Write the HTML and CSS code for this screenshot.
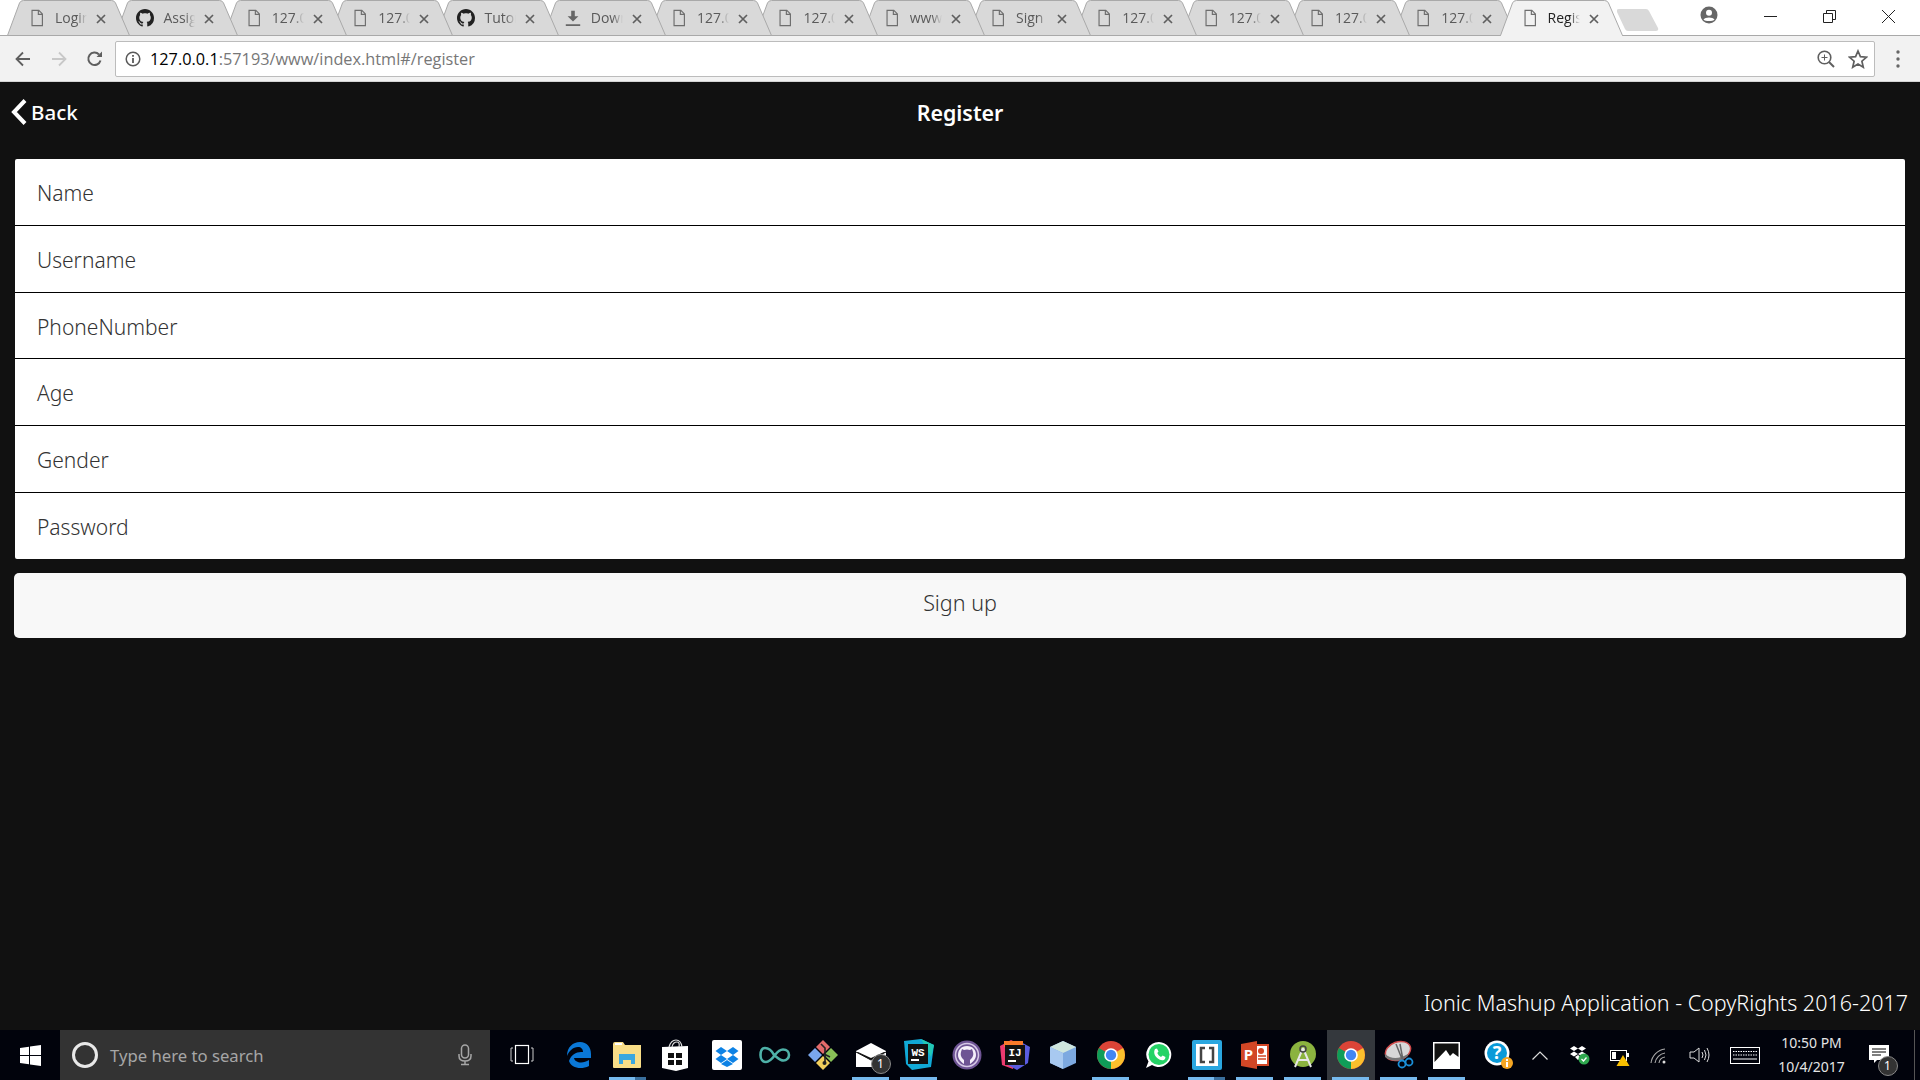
FILE: index.html
```html
<!DOCTYPE html>
<html lang="en">
<head>
<meta charset="utf-8">
<title>Register</title>
<link rel="stylesheet" href="styles.css">
</head>
<body>
<svg class="defs" width="0" height="0" aria-hidden="true">
  <symbol id="tabshape" viewBox="0 0 123 36"><path d="M0.5 35.5L12.5 3Q13.6 .5 16.5 .5H104.5Q107.4 .5 108.5 3L122.5 35.5Z" fill="#d9d9d9" stroke="#a9a9a9"/></symbol>
  <symbol id="tabactive" viewBox="0 0 123 36"><path d="M0.5 35.5L12.5 3Q13.6 .5 16.5 .5H104.5Q107.4 .5 108.5 3L122.5 35.5" fill="#f2f2f2" stroke="#a9a9a9"/><path d="M1 35.5H122" stroke="#f2f2f2"/></symbol>
  <symbol id="doc" viewBox="0 0 16 20"><path d="M2.5 1.5H10L14 5.5V18.500H2.500ZM9.500 1.500V6H14" fill="none" stroke="#6e6e6e" stroke-width="1.300"/></symbol>
  <symbol id="gh" viewBox="0 0 16 16"><path fill="#222" d="M8 0C3.58 0 0 3.58 0 8c0 3.54 2.29 6.53 5.47 7.59.4.07.55-.17.55-.38 0-.19-.01-.82-.01-1.49-2.01.37-2.53-.49-2.69-.94-.09-.23-.48-.94-.82-1.13-.28-.15-.68-.52-.01-.53.63-.01 1.08.58 1.23.82.72 1.21 1.87.87 2.33.66.07-.52.28-.87.51-1.07-1.78-.2-3.64-.89-3.64-3.95 0-.87.31-1.59.82-2.15-.08-.2-.36-1.02.08-2.12 0 0 .67-.21 2.2.82.64-.18 1.32-.27 2-.27.68 0 1.36.09 2 .27 1.53-1.04 2.2-.82 2.2-.82.44 1.1.16 1.92.08 2.12.51.56.82 1.27.82 2.15 0 3.07-1.87 3.75-3.65 3.95.29.25.54.73.54 1.48 0 1.07-.01 1.93-.01 2.2 0 .21.15.46.55.38A8.013 8.013 0 0016 8c0-4.42-3.58-8-8-8z"/></symbol>
  <symbol id="dl" viewBox="0 0 20 20"><path d="M8 2h4v6h4l-6 6-6-6h4zM2 17h16v2H2z" fill="#666"/></symbol>
  <symbol id="x" viewBox="0 0 10 10"><path d="M1 1L9 9M9 1L1 9" stroke="#5f5f5f" stroke-width="1.700" fill="none"/></symbol>
  <symbol id="chrome" viewBox="0 0 32 32">
    <circle cx="16" cy="16" r="14" fill="#db4437"/>
    <path d="M28.100 9A14 14 0 0 1 16 30L16 16Z" fill="#fbc02d"/>
    <path d="M16 30A14 14 0 0 1 3.900 9L16 16Z" fill="#0f9d58"/>
    <circle cx="16" cy="16" r="6.800" fill="#fff"/><circle cx="16" cy="16" r="5.200" fill="#4285f4"/>
  </symbol>
</svg>

<header class="browser">
  <div class="tabstrip">
    <div class="tab"><svg class="shape"><use href="#tabshape"/></svg><svg class="fav"><use href="#doc"/></svg><span class="tabtitle">Login</span><svg class="close"><use href="#x"/></svg></div>
    <div class="tab"><svg class="shape"><use href="#tabshape"/></svg><svg class="fav"><use href="#gh"/></svg><span class="tabtitle">Assignment</span><svg class="close"><use href="#x"/></svg></div>
    <div class="tab"><svg class="shape"><use href="#tabshape"/></svg><svg class="fav"><use href="#doc"/></svg><span class="tabtitle">127.0.0.1</span><svg class="close"><use href="#x"/></svg></div>
    <div class="tab"><svg class="shape"><use href="#tabshape"/></svg><svg class="fav"><use href="#doc"/></svg><span class="tabtitle">127.0.0.1</span><svg class="close"><use href="#x"/></svg></div>
    <div class="tab"><svg class="shape"><use href="#tabshape"/></svg><svg class="fav"><use href="#gh"/></svg><span class="tabtitle">Tutorial</span><svg class="close"><use href="#x"/></svg></div>
    <div class="tab"><svg class="shape"><use href="#tabshape"/></svg><svg class="fav"><use href="#dl"/></svg><span class="tabtitle">Downloads</span><svg class="close"><use href="#x"/></svg></div>
    <div class="tab"><svg class="shape"><use href="#tabshape"/></svg><svg class="fav"><use href="#doc"/></svg><span class="tabtitle">127.0.0.1</span><svg class="close"><use href="#x"/></svg></div>
    <div class="tab"><svg class="shape"><use href="#tabshape"/></svg><svg class="fav"><use href="#doc"/></svg><span class="tabtitle">127.0.0.1</span><svg class="close"><use href="#x"/></svg></div>
    <div class="tab"><svg class="shape"><use href="#tabshape"/></svg><svg class="fav"><use href="#doc"/></svg><span class="tabtitle">www.example</span><svg class="close"><use href="#x"/></svg></div>
    <div class="tab"><svg class="shape"><use href="#tabshape"/></svg><svg class="fav"><use href="#doc"/></svg><span class="tabtitle">Sign up</span><svg class="close"><use href="#x"/></svg></div>
    <div class="tab"><svg class="shape"><use href="#tabshape"/></svg><svg class="fav"><use href="#doc"/></svg><span class="tabtitle">127.0.0.1</span><svg class="close"><use href="#x"/></svg></div>
    <div class="tab"><svg class="shape"><use href="#tabshape"/></svg><svg class="fav"><use href="#doc"/></svg><span class="tabtitle">127.0.0.1</span><svg class="close"><use href="#x"/></svg></div>
    <div class="tab"><svg class="shape"><use href="#tabshape"/></svg><svg class="fav"><use href="#doc"/></svg><span class="tabtitle">127.0.0.1</span><svg class="close"><use href="#x"/></svg></div>
    <div class="tab"><svg class="shape"><use href="#tabshape"/></svg><svg class="fav"><use href="#doc"/></svg><span class="tabtitle">127.0.0.1</span><svg class="close"><use href="#x"/></svg></div>
    <div class="tab active"><svg class="shape"><use href="#tabactive"/></svg><svg class="fav"><use href="#doc"/></svg><span class="tabtitle">Register</span><svg class="close"><use href="#x"/></svg></div>
    <svg class="newtab" width="42" height="22" viewBox="0 0 42 22"><path d="M2 0H29Q31 0 32 2L41 19Q42 22 39 22H11Q9 22 8 20L0 3Q-1 0 2 0Z" fill="#d9d9d9"/></svg>
    <div class="winctl">
      <svg class="profile" width="18" height="18" viewBox="0 0 18 18"><circle cx="9" cy="9" r="8.500" fill="#666"/><circle cx="9" cy="6.800" r="3" fill="#fff"/><path d="M3.500 13.500C5 10.700 13 10.700 14.500 13.500C13 15.500 5 15.500 3.500 13.500Z" fill="#fff"/></svg>
      <svg class="wbtn" width="13" height="13" viewBox="0 0 13 13"><path d="M0 6.500H13" stroke="#222"/></svg>
      <svg class="wbtn" width="13" height="13" viewBox="0 0 13 13"><path d="M.5 3.500H9.500V12.500H.5ZM3.500 3.500V.5H12.500V9.500H9.500" fill="none" stroke="#222"/></svg>
      <svg class="wbtn" width="13" height="13" viewBox="0 0 13 13"><path d="M0 0L13 13M13 0L0 13" stroke="#222"/></svg>
    </div>
  </div>
  <div class="toolbar">
    <svg class="tool" width="20" height="20" viewBox="0 0 20 20"><path d="M17 10H4M10 3.500L3.500 10L10 16.500" fill="none" stroke="#5f5f5f" stroke-width="1.800"/></svg>
    <svg class="tool" width="20" height="20" viewBox="0 0 20 20"><path d="M3 10H16M10 3.500L16.500 10L10 16.500" fill="none" stroke="#c8c8c8" stroke-width="1.800"/></svg>
    <svg class="tool" width="20" height="20" viewBox="0 0 20 20"><path d="M15.500 11.500A6.200 6.200 0 1 1 14 5.500" fill="none" stroke="#5f5f5f" stroke-width="2"/><path d="M11.500 8H17V2.500Z" fill="#5f5f5f"/></svg>
    <div class="omnibox">
      <svg class="info" width="16" height="16" viewBox="0 0 16 16"><circle cx="8" cy="8" r="6.800" fill="none" stroke="#5a5a5a" stroke-width="1.500"/><path d="M7.100 7h1.800v5H7.100zM7.100 4h1.800v1.800H7.100z" fill="#5a5a5a"/></svg>
      <span class="url"><span class="host">127.0.0.1</span>:57193/www/index.html#/register</span>
      <svg class="omni-zoom" width="20" height="20" viewBox="0 0 20 20"><circle cx="8.500" cy="8.500" r="6.300" fill="none" stroke="#5f5f5f" stroke-width="1.600"/><path d="M13 13L18 18" stroke="#5f5f5f" stroke-width="2"/><path d="M5.500 8.500H11.500M8.500 5.500V11.500" stroke="#5f5f5f"/></svg>
      <svg class="omni-star" width="20" height="20" viewBox="0 0 20 20"><path d="M10 2L12.400 7.700L18.500 8.200L13.900 12.200L15.300 18.200L10 15L4.700 18.200L6.100 12.200L1.500 8.200L7.600 7.700Z" fill="none" stroke="#5f5f5f" stroke-width="1.700"/></svg>
    </div>
    <svg class="dots" width="6" height="20" viewBox="0 0 6 20"><circle cx="3" cy="3" r="1.700" fill="#666"/><circle cx="3" cy="10" r="1.700" fill="#666"/><circle cx="3" cy="17" r="1.700" fill="#666"/></svg>
  </div>
</header>

<main class="page">
  <div class="navbar">
    <a class="back"><svg width="18" height="28" viewBox="0 0 18 28"><path d="M15 2.500L4 14L15 25.500" fill="none" stroke="#fff" stroke-width="4"/></svg><span>Back</span></a>
    <h1 class="title">Register</h1>
    <span></span>
  </div>
  <form class="list">
    <div class="row">Name</div>
    <div class="row">Username</div>
    <div class="row">PhoneNumber</div>
    <div class="row">Age</div>
    <div class="row">Gender</div>
    <div class="row">Password</div>
  </form>
  <div class="signup">Sign up</div>
  <p class="copyright">Ionic Mashup Application - CopyRights 2016-2017</p>
</main>

<footer class="taskbar">
  <div class="start"><svg width="21" height="21" viewBox="0 0 21 21"><path d="M0 3L9 1.700V10H0ZM10 1.500L21 0V10H10ZM0 11H9V19.300L0 18ZM10 11H21V21L10 19.500Z" fill="#fff"/></svg></div>
  <div class="search">
    <svg class="cortana" width="28" height="28" viewBox="0 0 28 28"><circle cx="14" cy="14" r="11.500" fill="none" stroke="#e8e8e8" stroke-width="3"/></svg>
    <span class="search-text">Type here to search</span>
    <svg class="mic" width="14" height="22" viewBox="0 0 14 22"><rect x="3.500" y="1" width="7" height="13" rx="3.500" fill="none" stroke="#a6a6a6" stroke-width="1.500"/><path d="M1 10V12Q1 17 7 17Q13 17 13 12V10M7 17V20M3 20.500H11" fill="none" stroke="#a6a6a6" stroke-width="1.500"/></svg>
  </div>
  <div class="taskview"><svg width="24" height="22" viewBox="0 0 24 22"><rect x="5.500" y="1.500" width="13" height="18" fill="none" stroke="#fff" stroke-width="1.200"/><path d="M3 4H1V17H3M21 4H23V17H21" fill="none" stroke="#ccc"/></svg></div>
  <div class="apps">
    <div class="app"><svg width="32" height="32" viewBox="0 0 32 32"><path d="M4 17C4 8 10 3 17 3C24 3 28 8 28 15V19H11C12 24 20 25 26 21V27C18 31 8 29 6 22C8 16 13 13 18 13H20C20 10 18 8 15 8C10 8 6 12 4 17Z" fill="#0a78d7"/></svg></div>
    <div class="app on split"><svg width="30" height="28" viewBox="0 0 30 28"><path d="M1 3Q1 1 3 1H11L13 4H29V26Q29 27 28 27H2Q1 27 1 26Z" fill="#f8dd87"/><path d="M3 2H10V4H3Z" fill="#fff"/><path d="M7 13H23V23H19V19H11V23H7Z" fill="#3aa7e0"/></svg></div>
    <div class="app"><svg width="28" height="32" viewBox="0 0 28 32"><path d="M1 8L27 7V29L15 32L1 29Z" fill="#fff"/><path d="M8 8Q10 1 15 1Q20 1 21 8M11 8Q12 3 16 3Q19 3 18 8" fill="none" stroke="#ddd" stroke-width="1.200"/><path d="M7 14H13V19H7ZM15 14H21V19H15ZM7 21H13V26H7ZM15 21H21V26H15Z" fill="#111"/></svg></div>
    <div class="app"><svg width="30" height="30" viewBox="0 0 30 30"><rect width="30" height="30" rx="2" fill="#fff"/><path d="M9 7L15 11L9 15L3.500 11ZM21 7L26.500 11L21 15L15 11ZM9 15L15 19L9 23L3.500 19ZM21 15L26.500 19L21 23L15 19ZM15 20L21 24L15 27L9 24Z" fill="#0d82e5"/></svg></div>
    <div class="app"><svg width="32" height="20" viewBox="0 0 32 20"><path d="M15 10C12 4 8 3 6 3C3 3 1.500 6 1.500 10C1.500 14 3.500 17 7 17C10 17 13 14 16 10C19 6 21 4.500 24 4.500C28 4.500 30 7 30 10C30 13 27.500 15.500 24.500 15.500C21 15.500 18 12 15 10" fill="none" stroke="#4eb1a8" stroke-width="2.600"/></svg></div>
    <div class="app"><svg width="32" height="32" viewBox="0 0 32 32"><path d="M16 1L23 8L16 15L9 8Z" fill="#e26a6a"/><path d="M8 9L15 16L8 23L1 16Z" fill="#7aa7ee"/><path d="M24 9L31 16L24 23L17 16Z" fill="#88c057"/><path d="M16 17L23 24L16 31L9 24Z" fill="#f2cf5c"/><path d="M14 5L18 9V23M17 15L23 18" stroke="#222" stroke-width="1.600" fill="none"/><circle cx="17.500" cy="24" r="2" fill="#222"/></svg></div>
    <div class="app on"><svg class="badged" width="30" height="24" viewBox="0 0 30 24"><path d="M0 8L15 0L30 8V24H0Z" fill="#fff"/><path d="M0 9L15 17L30 9" fill="#111" stroke="#111"/><path d="M2 9L15 2L28 9L15 15Z" fill="#fff"/></svg><span class="badge">1</span></div>
    <div class="app on"><svg width="32" height="32" viewBox="0 0 32 32"><path d="M1 2L18 0L31 6L28 28L9 31L3 25Z" fill="#11a9d6"/><path d="M18 0L31 6L28 18Z" fill="#23c8b4"/><path d="M5 5H25V25H5Z" fill="#111"/><text x="15" y="17" class="icotext">WS</text><rect x="8" y="20" width="8" height="2" fill="#fff"/></svg></div>
    <div class="app"><svg width="30" height="30" viewBox="0 0 30 30"><circle cx="15" cy="15" r="14.500" fill="#6e5494"/><circle cx="15" cy="15" r="11.500" fill="#6e5494" stroke="#d5c8e6" stroke-width="1.500"/><path d="M15 6C9 6 6 10 6 15C6 19 9 22 12 24V20C10 18 8 16 9 12L10 9L12 10Q15 9 18 10L20 9L21 12C22 16 20 18 18 20V24C21 22 24 19 24 15C24 10 21 6 15 6Z" fill="#f5f0fa"/></svg></div>
    <div class="app"><svg width="32" height="32" viewBox="0 0 32 32"><path d="M1 7L12 1L20 5L14 30L3 26Z" fill="#ee3a6f"/><path d="M20 2L31 8L29 24L18 31L9 26Z" fill="#5a5ce0"/><path d="M5 2H24V8H5Z" fill="#f97a2b"/><path d="M6 6H26V26H6Z" fill="#111"/><text x="16" y="17" class="icotext">IJ</text><rect x="9" y="21" width="8" height="2" fill="#fff"/></svg></div>
    <div class="app"><svg width="28" height="30" viewBox="0 0 28 30"><path d="M14 1L27 7V23L14 29L1 23V7Z" fill="#7da9e0"/><path d="M14 1L27 7L14 13L1 7Z" fill="#cfe6de"/><path d="M1 7L14 13V29L1 23Z" fill="#a8c9f0"/></svg></div>
    <div class="app on"><svg width="32" height="32"><use href="#chrome"/></svg></div>
    <div class="app"><svg width="28" height="28" viewBox="0 0 28 28"><path d="M14 1A12.500 12.500 0 1 1 7 24L1 27L3.500 20.500A12.500 12.500 0 0 1 14 1Z" fill="#fff"/><circle cx="14" cy="13.500" r="10.500" fill="#25d366"/><path d="M10 8L12 7.500L13.500 10.500L12.300 12C13 14 14.500 15.300 16 16L17.600 14.500L20.500 16L20 18C18.500 20 15 19.500 12.500 17.300C9.500 15 8.300 11 10 8Z" fill="#fff"/></svg></div>
    <div class="app on split"><svg width="30" height="30" viewBox="0 0 30 30"><rect width="30" height="30" rx="2" fill="#2aa7e0"/><rect x="4" y="4" width="22" height="22" fill="#fff"/><path d="M13 8H9V22H13M17 8H21V22H17" fill="none" stroke="#444" stroke-width="2.500"/></svg></div>
    <div class="app on"><svg width="28" height="28" viewBox="0 0 28 28"><path d="M16 0V3H28V25H16V28L0 25V3Z" fill="#d24726"/><path d="M16 5H26V23H16Z" fill="#fff"/><path d="M17 15H25M17 18H25" stroke="#d24726" stroke-width="1.500"/><circle cx="20" cy="10" r="3" fill="#d24726"/><text x="7.500" y="19" class="pptext">P</text></svg></div>
    <div class="app on"><svg width="30" height="30" viewBox="0 0 30 30"><circle cx="15" cy="14" r="13" fill="#8bb33f"/><path d="M15 8L7 27M15 8L23 27M9 20H21" fill="none" stroke="#e8e8e8" stroke-width="2"/><circle cx="15" cy="9" r="3" fill="none" stroke="#444" stroke-width="1.500"/></svg></div>
    <div class="app on active"><svg width="32" height="32"><use href="#chrome"/></svg></div>
    <div class="app on"><svg width="30" height="30" viewBox="0 0 30 30"><ellipse cx="14" cy="11" rx="13" ry="9" transform="rotate(-20 14 11)" fill="#d8d8d8" stroke="#d04a4a" stroke-width="1.500"/><path d="M1 14Q10 22 24 14L24 16Q12 25 1 17Z" fill="#777"/><path d="M12 4L18 19M16 4L19 20" stroke="#666" stroke-width="1.500"/><circle cx="18" cy="24" r="3.500" fill="none" stroke="#1a8fd8" stroke-width="1.800"/><circle cx="25" cy="22" r="3.500" fill="none" stroke="#1a8fd8" stroke-width="1.800"/></svg></div>
    <div class="app on"><svg width="27" height="27" viewBox="0 0 27 27"><path d="M0 0H27V27H0Z" fill="#fff"/><path d="M1.500 1.500H25.500V15L20 11L17 14L13 8L1.500 20Z" fill="#111"/></svg></div>
  </div>
  <div class="tray">
    <div class="help"><svg width="30" height="30" viewBox="0 0 30 30"><circle cx="13" cy="13" r="12.500" fill="#fff"/><circle cx="13" cy="13" r="10" fill="#0a9ad8"/><text x="13" y="19" class="helptext">?</text><circle cx="23" cy="23" r="6" fill="#f5a623"/><path d="M22 22H24V27H22ZM22 19H24V21H22Z" fill="#fff"/></svg></div>
    <svg class="chev" width="16" height="9" viewBox="0 0 16 9"><path d="M.5 8.500L8 1L15.500 8.500" fill="none" stroke="#ddd" stroke-width="1.200"/></svg>
    <svg class="traydrop" width="20" height="20" viewBox="0 0 20 20"><path d="M4 1L8 3.500L4 6L0 3.500ZM12 1L16 3.500L12 6L8 3.500ZM4 6.500L8 9L4 11.500L0 9ZM12 6.500L16 9L12 11.500L8 9ZM8 10L11 12L8 15L5 12Z" fill="#fff"/><circle cx="14" cy="14" r="5.500" fill="#2fa84f"/><path d="M11.500 14L13.500 16L16.500 12.500" fill="none" stroke="#fff" stroke-width="1.300"/></svg>
    <svg class="traybat" width="20" height="20" viewBox="0 0 20 20"><rect x=".5" y="3.500" width="16" height="10" fill="none" stroke="#fff"/><rect x="2" y="5" width="4" height="7" fill="#fff"/><rect x="17" y="6" width="2" height="4" fill="#fff"/><path d="M13 8L19.500 19H6.500Z" fill="#fac000"/></svg>
    <svg class="traywifi" width="20" height="18" viewBox="0 0 20 18"><path d="M1 17A16 16 0 0 1 15 3M5 17A12 12 0 0 1 15 7M9 17A7 7 0 0 1 15 11" fill="none" stroke="#aaa" stroke-width="1.100"/><circle cx="14" cy="16" r="1.500" fill="#ddd"/></svg>
    <svg class="trayvol" width="22" height="18" viewBox="0 0 22 18"><path d="M1 6H5L10 2V16L5 12H1Z" fill="none" stroke="#ddd"/><path d="M13 6Q15 9 13 12M15.500 4Q18.500 9 15.500 14M18 2Q22 9 18 16" fill="none" stroke="#ddd"/></svg>
    <svg class="traykey" width="30" height="17" viewBox="0 0 30 17"><rect x=".5" y=".5" width="29" height="16" fill="none" stroke="#fff"/><path d="M3 4.500H27M3 8H27" stroke="#fff" stroke-dasharray="1.500 1"/><path d="M3 12H27" stroke="#fff"/></svg>
    <div class="clock"><span>10:50 PM</span><span>10/4/2017</span></div>
    <div class="notif"><svg width="20" height="18" viewBox="0 0 20 18"><path d="M0 0H20V15H8L5 18V15H0Z" fill="#fff"/><path d="M3 4H17M3 7H17M3 10H12" stroke="#000"/></svg><span class="badge">1</span></div>
    <div class="showdesk"></div>
  </div>
</footer>
</body>
</html>
```

FILE: styles.css
```css
* { box-sizing: border-box; }
html, body { margin: 0; height: 100%; }
body {
  width: 1920px;
  height: 1080px;
  overflow: hidden;
  display: flex;
  flex-direction: column;
  background: #111;
  font-family: "Noto Sans", "Open Sans", sans-serif;
}
.defs { position: absolute; }

/* Browser chrome */
.browser { flex: none; height: 82px; display: flex; flex-direction: column; }
.tabstrip {
  height: 36px;
  background: #fff;
  display: flex;
  padding-left: 7px;
  box-shadow: inset 0 -1px #a9a9a9;
}
.tab {
  position: relative;
  flex: none;
  width: 123px;
  height: 36px;
  margin-right: -16.7px;
  display: flex;
  align-items: center;
  padding: 0 0 0 21px;
  font-family: "Open Sans", sans-serif;
  font-size: 14px;
  color: #5a5a5a;
}
.tab:nth-child(-n+2) { margin-right: -14.6px; }
.tab:nth-child(1) { z-index: 15; } .tab:nth-child(2) { z-index: 14; } .tab:nth-child(3) { z-index: 13; }
.tab:nth-child(4) { z-index: 12; } .tab:nth-child(5) { z-index: 11; } .tab:nth-child(6) { z-index: 10; }
.tab:nth-child(7) { z-index: 9; } .tab:nth-child(8) { z-index: 8; } .tab:nth-child(9) { z-index: 7; }
.tab:nth-child(10) { z-index: 6; } .tab:nth-child(11) { z-index: 5; } .tab:nth-child(12) { z-index: 4; }
.tab:nth-child(13) { z-index: 3; } .tab:nth-child(14) { z-index: 2; } .tab:nth-child(15) { z-index: 1; }
.tab.active { z-index: 20; color: #222; }
.shape { position: absolute; left: 0; top: 0; width: 123px; height: 36px; }
.fav { position: relative; flex: none; width: 18px; height: 18px; margin-top: 0; }
.tabtitle {
  position: relative;
  width: 32px;
  margin-left: 9px;
  overflow: hidden;
  white-space: nowrap;
  margin-top: -1px;
  -webkit-mask-image: linear-gradient(90deg, #000 68%, transparent);
  mask-image: linear-gradient(90deg, #000 68%, transparent);
}
.close { position: relative; flex: none; width: 10px; height: 10px; margin-left: 9px; margin-top: 1px; }
.newtab { flex: none; margin: 9px 0 0 11px; position: relative; z-index: 1; }
.winctl {
  flex: 1;
  height: 32px;
  display: flex;
  align-items: center;
  justify-content: flex-end;
  padding-right: 25px;
}
.profile { margin-bottom: 3px; }
.wbtn { margin-left: 46px; }

.toolbar {
  flex: 1;
  display: flex;
  align-items: center;
  background: #f2f2f2;
  border-bottom: 1px solid #d4d4d4;
  padding: 0 12px 0 13px;
}
.tool { flex: none; margin-right: 16px; }
.tool:nth-child(3) { margin-right: 10px; }
.omnibox {
  flex: none;
  width: 1760px;
  height: 36px;
  margin-top: 1px;
  background: #fff;
  border: 1px solid #bcbcbc;
  border-radius: 2px;
  display: flex;
  align-items: center;
  padding-left: 9px;
}
.info { flex: none; margin-right: 9px; }
.url { flex: 1; font-family: "Open Sans", sans-serif; font-size: 16.3px; color: #777; white-space: nowrap; }
.host { color: #000; }
.omni-zoom { flex: none; margin-right: 12px; }
.omni-star { flex: none; margin-right: 6px; }
.dots { flex: none; margin-left: 20px; }

/* App page */
.page { flex: 1; min-height: 0; display: flex; flex-direction: column; background: #111; color: #fff; }
.navbar { flex: none; height: 77px; display: grid; grid-template-columns: 1fr auto 1fr; align-items: center; padding: 0 10px; }
.back { display: flex; align-items: center; font-size: 20.5px; font-weight: 500; margin-top: -17px; color: #fff; }
.back span { margin-left: 3px; }
.title { margin: -17px 0 0; font-size: 21.4px; font-weight: 600; }
.list {
  flex: none;
  height: 400px;
  margin: 0 15px;
  background: #fff;
  border-radius: 2px;
  display: flex;
  flex-direction: column;
}
.row {
  flex: 1;
  display: flex;
  align-items: center;
  padding: 2px 0 0 22px;
  font-size: 21px;
  font-weight: 300;
  color: #333;
  border-bottom: 1px solid #000;
}
.row:last-child { border-bottom: 0; }
.signup {
  flex: none;
  height: 65px;
  margin: 14px 14px 0;
  padding-bottom: 6px;
  background: #f8f8f8;
  border-radius: 5px;
  display: flex;
  align-items: center;
  justify-content: center;
  font-size: 21.5px;
  font-weight: 300;
  color: #333;
}
.copyright { margin: auto 12px 10px 0; text-align: right; font-size: 21.5px; font-weight: 300; line-height: 34px; }

/* Taskbar */
.taskbar { flex: none; height: 50px; display: flex; background: #01030c; color: #fff; }
.start { flex: none; width: 60px; display: flex; align-items: center; justify-content: center; }
.search {
  flex: none;
  width: 430px;
  background: #333;
  display: flex;
  align-items: center;
  padding: 0 18px 0 11px;
}
.cortana { flex: none; }
.search-text { flex: 1; margin-left: 11px; font-size: 16.7px; color: #a6a6a6; }
.mic { flex: none; }
.taskview { flex: none; width: 65px; padding-right: 2px; display: flex; align-items: center; justify-content: center; }
.apps { flex: none; display: flex; }
.app { position: relative; flex: none; width: 48px; display: flex; align-items: center; justify-content: center; }
.app:nth-child(4) { margin-left: 3.5px; }
.app.active { background: #34383d; }
.app.on::after {
  content: "";
  position: absolute;
  left: 5.5px;
  right: 5.5px;
  bottom: 0;
  height: 3px;
  background: #76b9ed;
}
.app.split::before {
  content: "";
  position: absolute;
  right: 5.5px;
  width: 11px;
  bottom: 0;
  height: 3px;
  background: #3a6f9d;
  z-index: 1;
}
.icotext { font: 700 11px "Liberation Mono", monospace; fill: #fff; text-anchor: middle; }
.pptext { font: 700 15px "Noto Sans", sans-serif; fill: #fff; text-anchor: middle; }
.helptext { font: 700 18px "Noto Sans", sans-serif; fill: #fff; text-anchor: middle; }
.badge {
  position: absolute;
  width: 20px;
  height: 20px;
  border-radius: 50%;
  background: #333;
  border: 1px solid #888;
  font-size: 12px;
  line-height: 18px;
  text-align: center;
  color: #fff;
}
.app .badge { left: 24px; top: 24px; }
.tray { flex: 1; display: flex; align-items: center; }
.help { flex: none; display: flex; width: 34px; margin-left: 13px; }
.chev { flex: none; margin-left: 14px; }
.traydrop { flex: none; margin-left: 22px; }
.traybat { flex: none; margin-left: 20px; margin-top: 3px; }
.traywifi { flex: none; margin-left: 20px; }
.trayvol { flex: none; margin-left: 19px; }
.traykey { flex: none; margin-left: 19px; }
.clock { flex: none; width: 92px; margin-left: 6px; display: flex; flex-direction: column; align-items: center; font-size: 14px; line-height: 24px; color: #e4e4e4; }
.notif { position: relative; flex: none; width: 20px; height: 18px; margin: -3px 0 0 11px; display: flex; }
.notif svg { flex: none; }
.notif .badge { left: 9px; top: 11px; }
.showdesk { flex: none; width: 1px; height: 50px; margin-left: 25px; background: #555; }
```
